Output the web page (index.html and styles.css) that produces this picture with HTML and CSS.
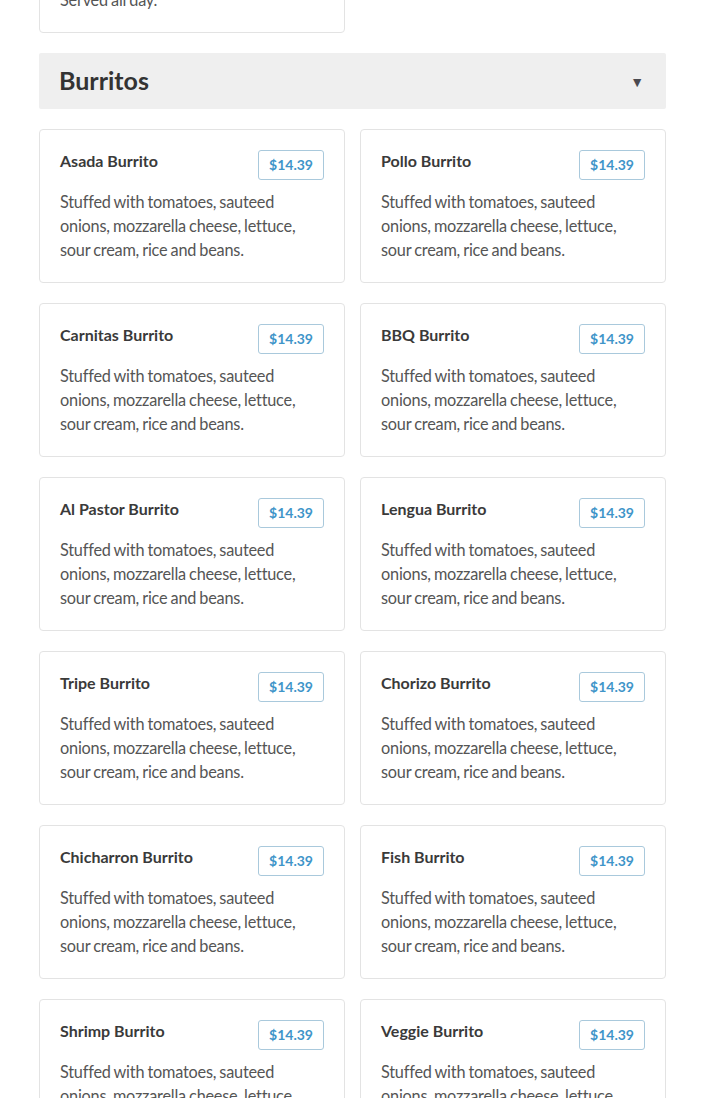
FILE: index.html
```html
<!DOCTYPE html>
<html>
<head>
<meta charset="utf-8">
<link rel="stylesheet" href="styles.css">
</head>
<body>
<div class="page">
  <div class="grid">
    <div class="card">
      <div class="card-head">
        <div class="item-name">Horchata</div>
        <div class="price">$3.49</div>
      </div>
      <p class="desc">Served all day.</p>
    </div>
  </div>

  <div class="section-head">
    <h2 class="section-title">Burritos</h2>
    <span class="caret">&#9660;</span>
  </div>

  <div class="grid">
    <div class="card"><div class="card-head"><div class="item-name">Asada Burrito</div><div class="price">$14.39</div></div><p class="desc">Stuffed with tomatoes, sauteed onions, mozzarella cheese, lettuce, sour cream, rice and beans.</p></div>
    <div class="card"><div class="card-head"><div class="item-name">Pollo Burrito</div><div class="price">$14.39</div></div><p class="desc">Stuffed with tomatoes, sauteed onions, mozzarella cheese, lettuce, sour cream, rice and beans.</p></div>
    <div class="card"><div class="card-head"><div class="item-name">Carnitas Burrito</div><div class="price">$14.39</div></div><p class="desc">Stuffed with tomatoes, sauteed onions, mozzarella cheese, lettuce, sour cream, rice and beans.</p></div>
    <div class="card"><div class="card-head"><div class="item-name">BBQ Burrito</div><div class="price">$14.39</div></div><p class="desc">Stuffed with tomatoes, sauteed onions, mozzarella cheese, lettuce, sour cream, rice and beans.</p></div>
    <div class="card"><div class="card-head"><div class="item-name">Al Pastor Burrito</div><div class="price">$14.39</div></div><p class="desc">Stuffed with tomatoes, sauteed onions, mozzarella cheese, lettuce, sour cream, rice and beans.</p></div>
    <div class="card"><div class="card-head"><div class="item-name">Lengua Burrito</div><div class="price">$14.39</div></div><p class="desc">Stuffed with tomatoes, sauteed onions, mozzarella cheese, lettuce, sour cream, rice and beans.</p></div>
    <div class="card"><div class="card-head"><div class="item-name">Tripe Burrito</div><div class="price">$14.39</div></div><p class="desc">Stuffed with tomatoes, sauteed onions, mozzarella cheese, lettuce, sour cream, rice and beans.</p></div>
    <div class="card"><div class="card-head"><div class="item-name">Chorizo Burrito</div><div class="price">$14.39</div></div><p class="desc">Stuffed with tomatoes, sauteed onions, mozzarella cheese, lettuce, sour cream, rice and beans.</p></div>
    <div class="card"><div class="card-head"><div class="item-name">Chicharron Burrito</div><div class="price">$14.39</div></div><p class="desc">Stuffed with tomatoes, sauteed onions, mozzarella cheese, lettuce, sour cream, rice and beans.</p></div>
    <div class="card"><div class="card-head"><div class="item-name">Fish Burrito</div><div class="price">$14.39</div></div><p class="desc">Stuffed with tomatoes, sauteed onions, mozzarella cheese, lettuce, sour cream, rice and beans.</p></div>
    <div class="card"><div class="card-head"><div class="item-name">Shrimp Burrito</div><div class="price">$14.39</div></div><p class="desc">Stuffed with tomatoes, sauteed onions, mozzarella cheese, lettuce, sour cream, rice and beans.</p></div>
    <div class="card"><div class="card-head"><div class="item-name">Veggie Burrito</div><div class="price">$14.39</div></div><p class="desc">Stuffed with tomatoes, sauteed onions, mozzarella cheese, lettuce, sour cream, rice and beans.</p></div>
  </div>
</div>
</body>
</html>
```
FILE: styles.css
```css
html, body {
  margin: 0;
  padding: 0;
  background: #ffffff;
}
body {
  font-family: Lato, "Open Sans", sans-serif;
  color: #333333;
  overflow: hidden;
}
.page {
  width: 627px;
  margin: -73px auto 0;
}
.grid {
  display: grid;
  grid-template-columns: 306px 306px;
  column-gap: 15px;
  row-gap: 20px;
}
.card {
  border: 1px solid #e3e3e3;
  border-radius: 4px;
  padding: 20px;
  background: #ffffff;
}
.card-head {
  display: flex;
  justify-content: space-between;
  align-items: flex-start;
  margin-bottom: 10px;
}
.item-name {
  font-size: 16px;
  font-weight: 700;
  line-height: 22px;
  color: #3a3a3a;
}
.price {
  box-sizing: border-box;
  height: 30px;
  padding: 0 10px 0 10px;
  border: 1px solid #a9c9dc;
  border-radius: 3px;
  font-size: 14px;
  font-weight: 700;
  line-height: 27px;
  color: #3f95c9;
}
.desc {
  margin: 0;
  font-size: 16.3px;
  line-height: 24px;
  letter-spacing: -0.22px;
  word-spacing: -0.8px;
  color: #555555;
}
.section-head {
  margin: 20px 0;
  height: 56px;
  box-sizing: border-box;
  background: #efefef;
  border-radius: 2px;
  display: flex;
  align-items: center;
  justify-content: space-between;
  padding: 0 22px 3px 20px;
}
.section-title {
  margin: 0;
  font-size: 25px;
  font-weight: 700;
  color: #333333;
}
.caret {
  font-size: 14px;
  color: #4a4a50;
  padding-top: 3px;
}
```
